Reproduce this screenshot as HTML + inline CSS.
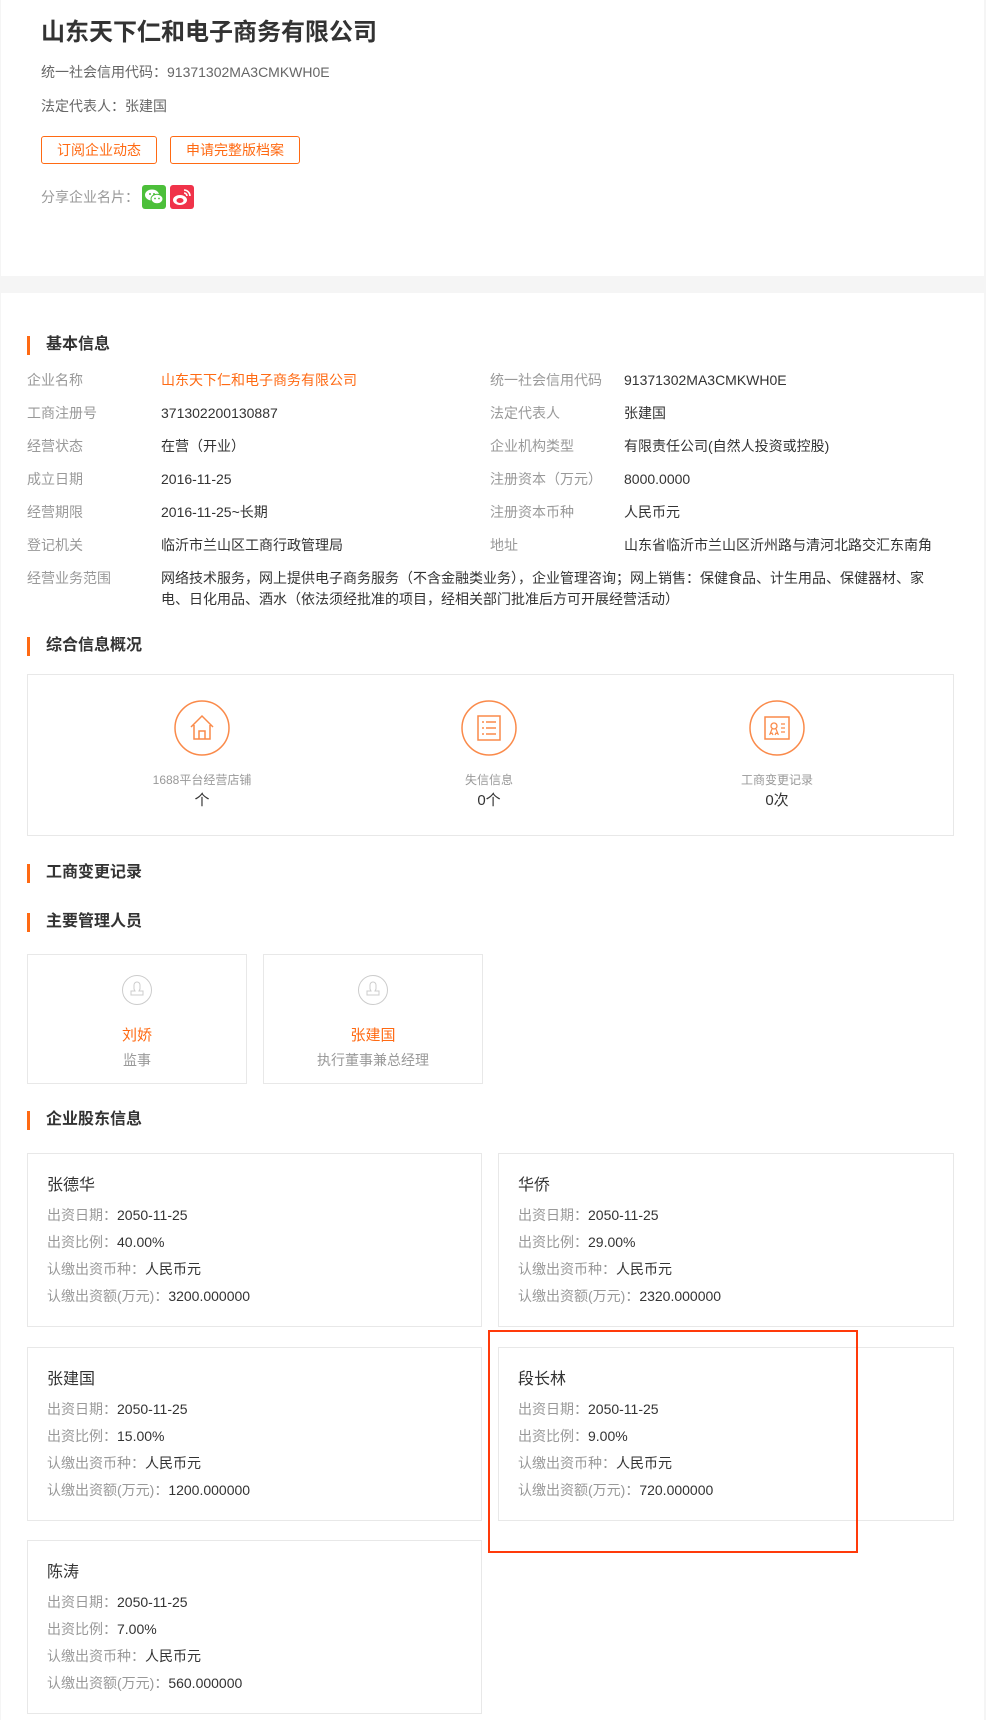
<!DOCTYPE html>
<html><head><meta charset="utf-8"><style>
*{margin:0;padding:0;box-sizing:border-box}
body{width:986px;height:1720px;background:#f5f5f5;font-family:"Liberation Sans","Noto Sans CJK SC",sans-serif;font-size:14px;color:#333;position:relative;overflow:hidden}
.a{position:absolute;white-space:nowrap;line-height:20px}
.card{position:absolute;background:#fff}
.g{color:#999}
.o{color:#ff6a13}
.h{position:absolute;left:27px;font-size:16px;font-weight:bold;color:#333;padding-left:19px;line-height:20px}
.h:before{content:"";position:absolute;left:0;top:1px;width:3px;height:19px;background:#ff6a13}
.btn{position:absolute;top:136px;height:28px;border:1px solid #ff6a13;border-radius:3px;color:#ff6a13;font-size:14px;line-height:26px;text-align:center}
.box{position:absolute;border:1px solid #e8e8e8;background:#fff}
.sh .n{position:absolute;left:19px;top:22px;font-size:16px;color:#333;line-height:20px}
.sh .l{position:absolute;left:19px;font-size:14px;line-height:20px;white-space:nowrap}
</style></head><body>
<div class="card" style="left:1px;top:0;width:983px;height:276px"></div>
<div class="a" style="left:41px;top:18px;font-size:24px;font-weight:bold;line-height:30px;color:#333">山东天下仁和电子商务有限公司</div>
<div class="a" style="left:41px;top:62px;color:#666">统一社会信用代码：91371302MA3CMKWH0E</div>
<div class="a" style="left:41px;top:96px;color:#666">法定代表人：张建国</div>
<div class="btn" style="left:41px;width:116px">订阅企业动态</div>
<div class="btn" style="left:170px;width:130px">申请完整版档案</div>
<div class="a g" style="left:41px;top:187px">分享企业名片：</div>
<div style="position:absolute;left:142px;top:185px;width:24px;height:24px;background:#4cbf3a;border-radius:3px">
<svg width="24" height="24" viewBox="0 0 24 24"><ellipse cx="10" cy="10" rx="7" ry="5.5" fill="#fff"/><ellipse cx="15" cy="14" rx="6" ry="4.8" fill="#fff" stroke="#4cbf3a" stroke-width="1"/><circle cx="8" cy="9" r="1" fill="#4cbf3a"/><circle cx="12" cy="9" r="1" fill="#4cbf3a"/><circle cx="13" cy="13.5" r=".9" fill="#4cbf3a"/><circle cx="17" cy="13.5" r=".9" fill="#4cbf3a"/></svg></div>
<div style="position:absolute;left:170px;top:185px;width:24px;height:24px;background:#f0334a;border-radius:3px">
<svg width="24" height="24" viewBox="0 0 24 24"><ellipse cx="10" cy="15" rx="7" ry="5" fill="#fff"/><ellipse cx="10" cy="15.5" rx="3.5" ry="2.5" fill="#f0334a"/><path d="M14 5a6 6 0 0 1 6 6M14 8a3 3 0 0 1 3 3" stroke="#fff" stroke-width="1.6" fill="none"/></svg></div>

<div class="card" style="left:1px;top:293px;width:983px;height:1427px"></div>
<div class="h" style="top:335px">基本信息</div>
<div class="a g" style="left:27px;top:370px">企业名称</div><div class="a o" style="left:161px;top:370px">山东天下仁和电子商务有限公司</div>
<div class="a g" style="left:490px;top:370px">统一社会信用代码</div><div class="a" style="left:624px;top:370px">91371302MA3CMKWH0E</div>
<div class="a g" style="left:27px;top:403px">工商注册号</div><div class="a" style="left:161px;top:403px">371302200130887</div>
<div class="a g" style="left:490px;top:403px">法定代表人</div><div class="a" style="left:624px;top:403px">张建国</div>
<div class="a g" style="left:27px;top:436px">经营状态</div><div class="a" style="left:161px;top:436px">在营（开业）</div>
<div class="a g" style="left:490px;top:436px">企业机构类型</div><div class="a" style="left:624px;top:436px">有限责任公司(自然人投资或控股)</div>
<div class="a g" style="left:27px;top:469px">成立日期</div><div class="a" style="left:161px;top:469px">2016-11-25</div>
<div class="a g" style="left:490px;top:469px">注册资本（万元）</div><div class="a" style="left:624px;top:469px">8000.0000</div>
<div class="a g" style="left:27px;top:502px">经营期限</div><div class="a" style="left:161px;top:502px">2016-11-25~长期</div>
<div class="a g" style="left:490px;top:502px">注册资本币种</div><div class="a" style="left:624px;top:502px">人民币元</div>
<div class="a g" style="left:27px;top:535px">登记机关</div><div class="a" style="left:161px;top:535px">临沂市兰山区工商行政管理局</div>
<div class="a g" style="left:490px;top:535px">地址</div><div class="a" style="left:624px;top:535px">山东省临沂市兰山区沂州路与清河北路交汇东南角</div>
<div class="a g" style="left:27px;top:568px">经营业务范围</div>
<div class="a" style="left:161px;top:568px;line-height:21px">网络技术服务，网上提供电子商务服务（不含金融类业务），企业管理咨询；网上销售：保健食品、计生用品、保健器材、家<br>电、日化用品、酒水（依法须经批准的项目，经相关部门批准后方可开展经营活动）</div>

<div class="h" style="top:636px">综合信息概况</div>
<div class="box" style="left:27px;top:674px;width:927px;height:162px"></div>
<svg style="position:absolute;left:172px;top:698px" width="60" height="60" viewBox="0 0 60 60"><circle cx="30" cy="30" r="27" fill="none" stroke="#fa8a4a" stroke-width="1.5"/><path d="M19 29 L30 18 L41 29 M22 27 V41 H38 V27 M27 41 V33 H33 V41" fill="none" stroke="#fa8a4a" stroke-width="1.5"/></svg>
<svg style="position:absolute;left:459px;top:698px" width="60" height="60" viewBox="0 0 60 60"><circle cx="30" cy="30" r="27" fill="none" stroke="#fa8a4a" stroke-width="1.5"/><rect x="19" y="18" width="22" height="24" fill="none" stroke="#fa8a4a" stroke-width="1.5"/><path d="M23 24h2M27 24h10M23 30h2M27 30h10M23 36h2M27 36h10" stroke="#fa8a4a" stroke-width="1.5"/></svg>
<svg style="position:absolute;left:747px;top:698px" width="60" height="60" viewBox="0 0 60 60"><circle cx="30" cy="30" r="27" fill="none" stroke="#fa8a4a" stroke-width="1.5"/><rect x="18" y="19" width="24" height="22" fill="none" stroke="#fa8a4a" stroke-width="1.5"/><circle cx="27" cy="28" r="3" fill="none" stroke="#fa8a4a" stroke-width="1.3"/><path d="M25 31l-2 5 2-1 1 2M29 31l2 5-2-1-1 2M34 26h4M34 30h4M34 34h4" fill="none" stroke="#fa8a4a" stroke-width="1.2"/></svg>
<div class="a g" style="left:102px;width:200px;text-align:center;top:770px;font-size:12px">1688平台经营店铺</div>
<div class="a" style="left:102px;width:200px;text-align:center;top:791px;font-size:15px">个</div>
<div class="a g" style="left:389px;width:200px;text-align:center;top:770px;font-size:12px">失信信息</div>
<div class="a" style="left:389px;width:200px;text-align:center;top:791px;font-size:15px">0个</div>
<div class="a g" style="left:677px;width:200px;text-align:center;top:770px;font-size:12px">工商变更记录</div>
<div class="a" style="left:677px;width:200px;text-align:center;top:791px;font-size:15px">0次</div>

<div class="h" style="top:863px">工商变更记录</div>
<div class="h" style="top:912px">主要管理人员</div>
<div class="box" style="left:27px;top:954px;width:220px;height:130px"></div>
<div class="box" style="left:263px;top:954px;width:220px;height:130px"></div>
<svg style="position:absolute;left:121px;top:974px" width="32" height="32" viewBox="0 0 32 32"><circle cx="16" cy="16" r="14.5" fill="none" stroke="#ccc"/><path d="M13 11a3 3 0 0 1 6 0v4l-1 2h4v4H10v-4h4l-1-2z" fill="none" stroke="#ccc"/></svg>
<svg style="position:absolute;left:357px;top:974px" width="32" height="32" viewBox="0 0 32 32"><circle cx="16" cy="16" r="14.5" fill="none" stroke="#ccc"/><path d="M13 11a3 3 0 0 1 6 0v4l-1 2h4v4H10v-4h4l-1-2z" fill="none" stroke="#ccc"/></svg>
<div class="a o" style="left:27px;width:220px;text-align:center;top:1026px;font-size:15px">刘娇</div>
<div class="a g" style="left:27px;width:220px;text-align:center;top:1050px">监事</div>
<div class="a o" style="left:263px;width:220px;text-align:center;top:1026px;font-size:15px">张建国</div>
<div class="a g" style="left:263px;width:220px;text-align:center;top:1050px">执行董事兼总经理</div>

<div class="h" style="top:1110px">企业股东信息</div>

<div class="box sh" style="left:27px;top:1153px;width:455px;height:174px"><div class="n">张德华</div><div class="l" style="top:51px"><span class="g">出资日期：</span>2050-11-25</div><div class="l" style="top:78px"><span class="g">出资比例：</span>40.00%</div><div class="l" style="top:105px"><span class="g">认缴出资币种：</span>人民币元</div><div class="l" style="top:132px"><span class="g">认缴出资额(万元)：</span>3200.000000</div></div>
<div class="box sh" style="left:498px;top:1153px;width:456px;height:174px"><div class="n">华侨</div><div class="l" style="top:51px"><span class="g">出资日期：</span>2050-11-25</div><div class="l" style="top:78px"><span class="g">出资比例：</span>29.00%</div><div class="l" style="top:105px"><span class="g">认缴出资币种：</span>人民币元</div><div class="l" style="top:132px"><span class="g">认缴出资额(万元)：</span>2320.000000</div></div>
<div class="box sh" style="left:27px;top:1347px;width:455px;height:174px"><div class="n">张建国</div><div class="l" style="top:51px"><span class="g">出资日期：</span>2050-11-25</div><div class="l" style="top:78px"><span class="g">出资比例：</span>15.00%</div><div class="l" style="top:105px"><span class="g">认缴出资币种：</span>人民币元</div><div class="l" style="top:132px"><span class="g">认缴出资额(万元)：</span>1200.000000</div></div>
<div class="box sh" style="left:498px;top:1347px;width:456px;height:174px"><div class="n">段长林</div><div class="l" style="top:51px"><span class="g">出资日期：</span>2050-11-25</div><div class="l" style="top:78px"><span class="g">出资比例：</span>9.00%</div><div class="l" style="top:105px"><span class="g">认缴出资币种：</span>人民币元</div><div class="l" style="top:132px"><span class="g">认缴出资额(万元)：</span>720.000000</div></div>
<div class="box sh" style="left:27px;top:1540px;width:455px;height:174px"><div class="n">陈涛</div><div class="l" style="top:51px"><span class="g">出资日期：</span>2050-11-25</div><div class="l" style="top:78px"><span class="g">出资比例：</span>7.00%</div><div class="l" style="top:105px"><span class="g">认缴出资币种：</span>人民币元</div><div class="l" style="top:132px"><span class="g">认缴出资额(万元)：</span>560.000000</div></div>
<div style="position:absolute;left:488px;top:1330px;width:370px;height:223px;border:2px solid #ff3a0a"></div>
</body></html>
